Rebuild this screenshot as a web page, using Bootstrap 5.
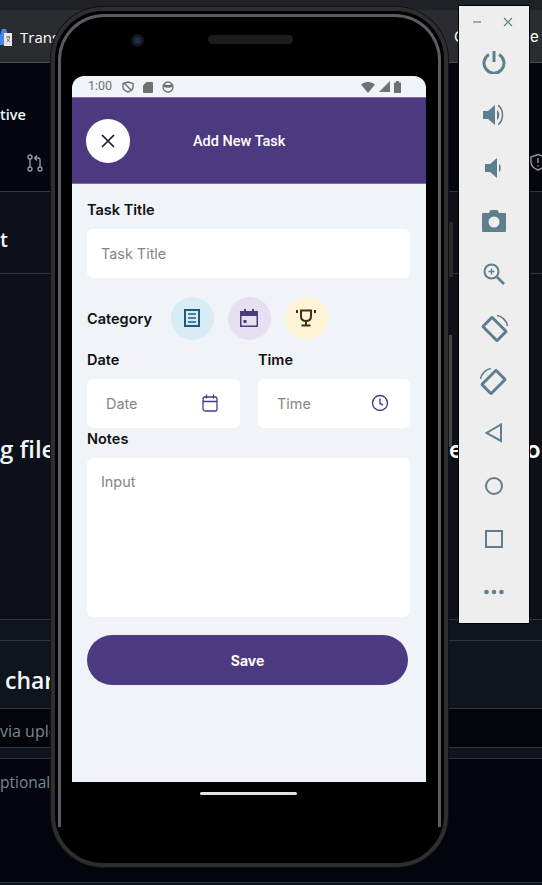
<!DOCTYPE html>
<html lang="en">

<head>
  <meta charset="UTF-8" />
  <meta name="viewport" content="width=device-width, initial-scale=1.0" />
  <title>Add New Task</title>
  <link rel="stylesheet" href="https://cdn.jsdelivr.net/npm/bootstrap@5.3.3/dist/css/bootstrap.min.css" />
  <style>
    html, body { height: 885px; overflow: hidden; }
    body { background: #0d1117; position: relative; width: 542px; font-family: "Inter", "Liberation Sans", sans-serif; }

    /* browser page behind the emulator */
    .page-back { font-family: "Open Sans", "Liberation Sans", sans-serif; color: #f0f6fc; overflow: hidden; }
    .back-row { border-bottom: 1px solid #30363d; overflow: hidden; white-space: nowrap; }
    .back-tabs { height: 63px; background: linear-gradient(#1e2125 10px, #2a2c30 10px); border-color: #4a4c50; padding: 26px 0 0 20px; color: #fff; font-size: 15px; }
    .back-head { height: 129px; padding-top: 41px; background: #03060c; font-size: 14.5px; font-weight: 600; }
    .back-title { height: 82px; padding-top: 33px; background: #0d1117; font-size: 20px; font-weight: 600; }
    .back-file { height: 346px; padding-top: 157px; font-size: 24px; font-weight: 600; }
    .back-gap { height: 21px; background: #10141b; }
    .back-chart { height: 68px; padding: 22px 0 0 5px; font-size: 23px; font-weight: 600; background: #10141b; }
    .back-note { height: 39px; padding-top: 10px; background: #02050a; color: #7d8590; font-size: 16px; }
    .back-strip { height: 11px; background: #10141b; }
    .back-last { height: 124px; padding-top: 12px; background: #02050b; color: #7d8590; font-size: 15.5px; }
    .pr-ico { position: absolute; left: 26px; top: 154px; }
    .shield-ico { position: absolute; left: 529px; top: 153px; }
    .back-right { position: absolute; color: #fff; }
    .tab-right-c { left: 454px; top: 26px; font-size: 15px; }
    .tab-right-e { left: 530px; top: 26px; font-size: 15px; }
    .file-right-e { left: 449px; top: 432px; font-size: 24px; font-weight: 600; }
    .file-right-o { left: 526px; top: 432px; font-size: 24px; font-weight: 600; }
    .translate-ico { position: absolute; left: -3px; top: 28px; }

    /* emulator window */
    .phone-shell {
      position: absolute; left: 51px; top: 7px; width: 397px; height: 860px;
      background: #000; border-radius: 52px;
      border: 4px solid #2e2e30;
      box-shadow: 0 0 0 1px #111;
    }
    .phone-shell::before {
      content: ""; position: absolute; top: 3px; left: 3px; right: 3px; bottom: 36px;
      border-radius: 46px 46px 0 0;
      border: 3px solid #5a5c60; border-bottom: 0;
    }
    .phone-btn-a { position: absolute; left: 449px; top: 222px; width: 4px; height: 55px; background: #2a2a2c; }
    .phone-btn-b { position: absolute; left: 449px; top: 335px; width: 3px; height: 112px; background: #48484a; }
    .phone-cam { position: absolute; left: 76px; top: 23px; width: 13px; height: 13px; border-radius: 50%; background: radial-gradient(circle, #1c2c5c 0 25%, #16181c 45%, #0b0b0c 100%); }
    .phone-speaker { position: absolute; left: 153px; top: 24px; width: 85px; height: 9px; border-radius: 5px; background: #1c1c1c; }
    .phone-screen { position: absolute; left: 17px; top: 65px; width: 354px; height: 706px; background: #f0f3f8; border-radius: 12px 12px 0 0; overflow: hidden; }
    .home-pill { position: absolute; left: 145px; top: 781px; width: 97px; height: 3px; border-radius: 2px; background: #e2e2e2; }

    .status-row { height: 21px; padding: 0 25px 0 16px; font-family: "Roboto", "Liberation Sans", sans-serif; font-size: 12.5px; color: #707070; }
    .status-ico { margin-right: 9px; }
    .status-time { margin-right: 10px; }
    .top-band { height: 87px; background: #4c3a80; padding: 0 14px; border-bottom: 1px solid #7b6da3; border-top: 1px solid #7b6da3; }
    .close-disc { width: 44px; height: 44px; border: 0; padding: 0; background: #fff; }
    .band-title { color: #fff; font-family: "Roboto", "Liberation Sans", sans-serif; font-size: 14.5px; font-weight: 500; margin-left: 63px; margin-top: 2px; }
    .form-zone { padding: 17px 16px 0 15px; }
    .field-label { color: #111; font-size: 14.5px; font-weight: 600; line-height: 17px; margin: 0; }
    .field-box { background: #fff; border: 0; border-radius: 6px; height: 49px; font-size: 14.4px; padding: 0 14px; color: #222; box-shadow: none; }
    .field-box::placeholder { color: #858585; }
    .title-box { width: 323px; margin-top: 11px; }
    .cat-row { margin-top: 18px; height: 44px; }
    .cat-disc { width: 43px; height: 43px; }
    .cat-blue { background: #d9ebf5; margin-left: 19px; }
    .cat-purple { background: #e6e0f2; margin-left: 14px; }
    .cat-yellow { background: #fdf5d6; margin-left: 14px; }
    .split-row { margin-top: 11px; width: 323px; }
    .date-col { width: 153px; }
    .time-col { width: 152px; margin-left: 18px; }
    .split-box { position: relative; margin-top: 11px; }
    .split-box .field-box { padding-left: 19px; width: 100%; }
    .box-ico { position: absolute; right: 22px; top: 15px; }
    .time-col .box-ico { right: 21px; }
    .notes-label { margin-top: 2px; }
    .notes-box { width: 323px; height: 159px; margin-top: 11px; padding: 13px 14px; resize: none; }
    .save-btn { width: 321px; height: 50px; margin-top: 18px; border-radius: 25px; background: #4c3a80; color: #fff; border: 0; font-size: 14px; font-weight: 700; }

    .side-tools { position: absolute; left: 458px; top: 5px; width: 72px; height: 619px; background: #eeeeee; border: 1px solid #000; }
    .win-btns { height: 29px; padding: 3px 16px 0 13px; }
    .tool-slot { height: 53px; }
    .tool-ico { fill: #5f7f8e; }
    .tool-line { fill: none; stroke: #5f7f8e; }
  </style>
</head>

<body>
  <!-- page behind the emulator -->
  <div class="page-back">
    <div class="back-row back-tabs">Transl</div>
    <div class="back-row back-head">tive</div>
    <div class="back-row back-title">t</div>
    <div class="back-row back-file">g file</div>
    <div class="back-row back-gap"></div>
    <div class="back-row back-chart">char</div>
    <div class="back-row back-note">via uplo</div>
    <div class="back-row back-strip"></div>
    <div class="back-row back-last">ptional</div>
  </div>
  <svg class="translate-ico" width="16" height="20" viewBox="0 0 16 20"><path d="M5 1 9 1 14 17 0 17Z" fill="#4a86e8"/><rect x="7" y="5" width="8" height="13" fill="#e8e8e8"/><path d="M9 9h4M11 8v1M9.500 14c2-1 3-3 3-5M10 10.500c1 2 2 3 3 3.500" fill="none" stroke="#555" stroke-width="0.800"/></svg>
  <svg class="pr-ico" width="18" height="18" viewBox="0 0 18 18" fill="none" stroke="#9198a1" stroke-width="1.4"><circle cx="4" cy="3" r="2"/><circle cx="4" cy="15" r="2"/><circle cx="14" cy="15" r="2"/><path d="M4 5v8M14 13V6c0-1.500-1-2-2-2H9M11 1.500 8.500 4 11 6.500"/></svg>
  <svg class="shield-ico" width="18" height="18" viewBox="0 0 18 18" fill="none" stroke="#9198a1" stroke-width="1.4"><path d="M9 1.500 16 4v5c0 4-3 6.500-7 8-4-1.500-7-4-7-8V4Z"/><path d="M9 5v5M9 12v1.500"/></svg>
  <span class="back-right tab-right-c">C</span>
  <span class="back-right tab-right-e">e</span>
  <span class="back-right file-right-e">e</span>
  <span class="back-right file-right-o">o</span>

  <!-- emulated phone -->
  <div class="phone-btn-a"></div>
  <div class="phone-btn-b"></div>
  <div class="phone-shell">
    <div class="phone-cam"></div>
    <div class="phone-speaker"></div>
    <div class="phone-screen">
      <div class="status-row d-flex align-items-center">
        <span class="status-time">1:00</span>
        <svg class="status-ico" width="12" height="12" viewBox="0 0 12 12" fill="none" stroke="#707070" stroke-width="1.400"><path d="M6 1 11 2.500V6c0 2.500-2 4-5 5C3 10 1 8.500 1 6V2.500ZM2 2 10 10"/></svg>
        <svg class="status-ico" width="10" height="12" viewBox="0 0 10 12" fill="#707070"><path d="M3.500 1H9a1 1 0 0 1 1 1v9a1 1 0 0 1-1 1H1a1 1 0 0 1-1-1V4.500Z"/></svg>
        <svg width="12" height="12" viewBox="0 0 12 12" fill="none" stroke="#707070" stroke-width="1.300"><circle cx="6" cy="6" r="5"/><path d="M1.500 4.500C4 5.500 8 5.500 10.500 4.500" stroke-width="2.600"/></svg>
        <span class="ms-auto d-flex align-items-center gap-1">
          <svg width="14" height="12" viewBox="0 0 14 12" fill="#707070"><path d="M0 3.500C4 0 10 0 14 3.500L7 12Z"/></svg>
          <svg width="11" height="11" viewBox="0 0 11 11" fill="#707070"><path d="M11 0V11H0Z"/></svg>
          <svg width="7" height="12" viewBox="0 0 7 12" fill="#707070"><path d="M2 0H5V1.500H7V12H0V1.500H2Z"/></svg>
        </span>
      </div>
      <div class="top-band d-flex align-items-center">
        <button type="button" class="btn close-disc rounded-circle d-flex align-items-center justify-content-center" aria-label="Close">
          <svg width="14" height="14" viewBox="0 0 14 14" stroke="#1a1a2e" stroke-width="1.700" fill="none"><path d="M1 1 13 13M13 1 1 13"/></svg>
        </button>
        <span class="band-title">Add New Task</span>
      </div>
      <div class="form-zone">
        <label class="field-label d-block">Task Title</label>
        <input class="form-control field-box title-box" placeholder="Task Title" />
        <div class="cat-row d-flex align-items-center">
          <span class="field-label">Category</span>
          <span class="cat-disc cat-blue rounded-circle d-flex align-items-center justify-content-center">
            <svg width="16" height="18" viewBox="0 0 16 18" fill="none" stroke="#1c5a80" stroke-width="2"><rect x="1" y="1" width="14" height="16"/><path d="M4 5h8M4 9h8M4 13h8" stroke-width="1.600"/></svg>
          </span>
          <span class="cat-disc cat-purple rounded-circle d-flex align-items-center justify-content-center">
            <svg width="18" height="18" viewBox="0 0 18 18" fill="#4c3a80"><path d="M4 0h2v2h6V0h2v2h4v16H0V2h4ZM1.500 7v9.500h15V7Z"/><rect x="3.500" y="11" width="3" height="3"/></svg>
          </span>
          <span class="cat-disc cat-yellow rounded-circle d-flex align-items-center justify-content-center">
            <svg width="20" height="18" viewBox="0 0 20 18" fill="none" stroke="#3e3010" stroke-width="2"><path d="M5 1.500h10V7c0 3-2 5-5 5S5 10 5 7ZM10 12v4.500M5.500 16.500h9M1 1v3M19 1v3"/></svg>
          </span>
        </div>
        <div class="split-row d-flex">
          <div class="date-col">
            <label class="field-label d-block">Date</label>
            <div class="split-box">
              <input class="form-control field-box" placeholder="Date" />
              <svg class="box-ico" width="16" height="18" viewBox="0 0 16 18" fill="none" stroke="#4c3a80" stroke-width="1.300"><rect x="1" y="3" width="14" height="14" rx="2"/><path d="M1 7.500h14M4.500 0.500v4M11.500 0.500v4"/></svg>
            </div>
          </div>
          <div class="time-col">
            <label class="field-label d-block">Time</label>
            <div class="split-box">
              <input class="form-control field-box" placeholder="Time" />
              <svg class="box-ico" width="18" height="18" viewBox="0 0 18 18" fill="none" stroke="#4c3a80" stroke-width="1.400"><circle cx="9" cy="9" r="7.500"/><path d="M9 4.500V9.500L12 11"/></svg>
            </div>
          </div>
        </div>
        <label class="field-label d-block notes-label">Notes</label>
        <textarea class="form-control field-box notes-box" placeholder="Input"></textarea>
        <button type="button" class="btn save-btn d-block">Save</button>
      </div>
    </div>
    <div class="home-pill"></div>
  </div>

  <!-- emulator side toolbar -->
  <div class="side-tools d-flex flex-column">
    <div class="win-btns d-flex align-items-center justify-content-between">
      <svg width="10" height="10" viewBox="0 0 10 10" class="tool-line" stroke-width="1.200"><path d="M1 5H9"/></svg>
      <svg width="10" height="10" viewBox="0 0 10 10" class="tool-line" stroke-width="1.200"><path d="M1 1 9 9M9 1 1 9"/></svg>
    </div>
    <div class="tool-slot d-flex align-items-center justify-content-center"><svg width="24" height="24" viewBox="0 0 24 24" class="tool-line" stroke-width="3"><path d="M12 1V12M7 4.500a10 10 0 1 0 10 0"/></svg></div>
    <div class="tool-slot d-flex align-items-center justify-content-center"><svg width="24" height="24" viewBox="0 0 24 24" class="tool-ico"><path d="M1 8H6L13 2V22L6 16H1ZM15 7c3 2 3 8 0 10ZM16 1.500c7 3 7 18 0 21v-2c5-3 5-14 0-17Z"/></svg></div>
    <div class="tool-slot d-flex align-items-center justify-content-center"><svg width="24" height="24" viewBox="0 0 24 24" class="tool-ico"><path d="M3 8H8L15 2V22L8 16H3ZM17 8c2.500 2 2.500 6 0 8Z"/></svg></div>
    <div class="tool-slot d-flex align-items-center justify-content-center"><svg width="26" height="24" viewBox="0 0 26 24" class="tool-ico"><path fill-rule="evenodd" d="M2 4H8L9.500 1H16.500L18 4H24a1 1 0 0 1 1 1V22a1 1 0 0 1-1 1H2a1 1 0 0 1-1-1V5a1 1 0 0 1 1-1ZM13 7.500a5.500 5.500 0 1 0 0 11 5.500 5.500 0 0 0 0-11Z"/></svg></div>
    <div class="tool-slot d-flex align-items-center justify-content-center"><svg width="24" height="24" viewBox="0 0 24 24" class="tool-line" stroke-width="2"><circle cx="9.500" cy="9.500" r="7"/><path d="M15 15 22 22" stroke-width="2.600"/><path d="M6.500 9.500h6M9.500 6.500v6" stroke-width="1.400"/></svg></div>
    <div class="tool-slot d-flex align-items-center justify-content-center"><svg width="30" height="30" viewBox="0 -2 30 30" class="tool-line"><rect x="9" y="5" width="13" height="20" rx="1" transform="rotate(-45 15.500 15)" stroke-width="3"/><path d="M18 1.500C23 2 28 7 28.500 12" stroke-width="1.600"/></svg></div>
    <div class="tool-slot d-flex align-items-center justify-content-center"><svg width="30" height="30" viewBox="0 -2 30 30" class="tool-line"><rect x="8" y="5" width="13" height="20" rx="1" transform="rotate(45 14.500 15)" stroke-width="3"/><path d="M12 1.500C7 2 2 7 1.500 12" stroke-width="1.600"/></svg></div>
    <div class="tool-slot d-flex align-items-center justify-content-center"><svg width="18" height="20" viewBox="0 0 18 20" class="tool-line" stroke-width="2"><path d="M16 1.500V18L1.500 10Z"/></svg></div>
    <div class="tool-slot d-flex align-items-center justify-content-center"><svg width="20" height="20" viewBox="0 0 20 20" class="tool-line" stroke-width="2"><circle cx="10" cy="10" r="8"/></svg></div>
    <div class="tool-slot d-flex align-items-center justify-content-center"><svg width="20" height="20" viewBox="0 0 20 20" class="tool-line" stroke-width="2"><rect x="2" y="2" width="16" height="16"/></svg></div>
    <div class="tool-slot d-flex align-items-center justify-content-center"><svg width="20" height="6" viewBox="0 0 20 6" class="tool-ico"><circle cx="2.500" cy="3" r="2.300"/><circle cx="10" cy="3" r="2.300"/><circle cx="17.500" cy="3" r="2.300"/></svg></div>
  </div>

  <script src="https://cdn.jsdelivr.net/npm/bootstrap@5.3.3/dist/js/bootstrap.bundle.min.js"></script>
</body>

</html>
